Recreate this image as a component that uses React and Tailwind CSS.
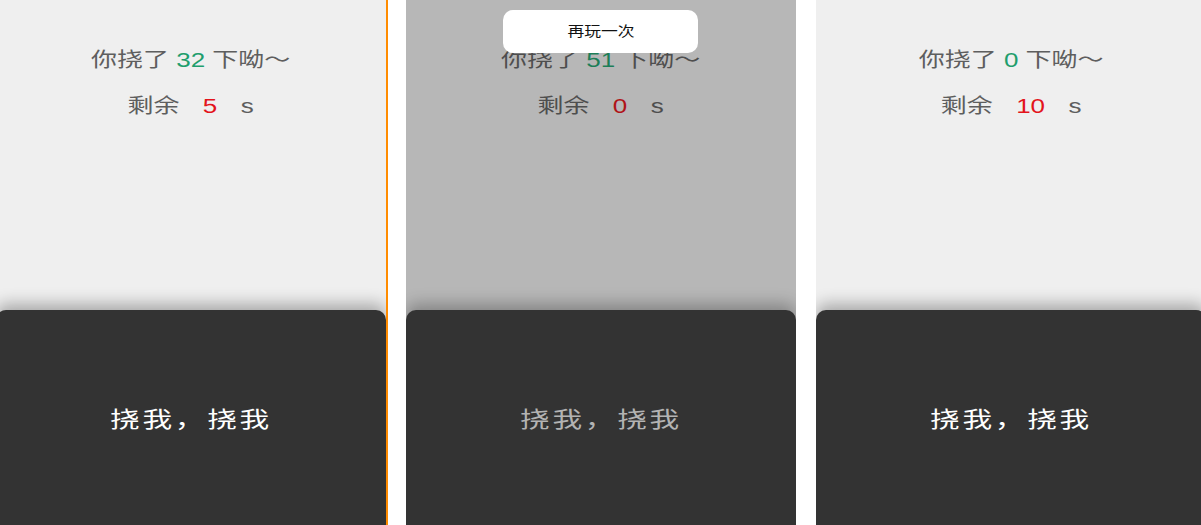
import React from "react";

const font = { fontFamily: '"Liberation Sans", "Noto Sans CJK SC", sans-serif' };

function Panel({ count, left, dim, children, className = "" }) {
    return (
        <div
            className={`relative w-[390px] h-[525px] shrink-0 flex flex-col overflow-hidden ${dim ? "bg-[#b7b7b7]" : "bg-[#efefef]"} ${className}`}
        >
            {/* score */}
            <div className="flex-1 flex flex-col items-center pt-[46px]">
                <div className={`text-[20px] leading-[28px] scale-x-[1.3] ${dim ? "text-[#4e4e4e]" : "text-[#5e5e5e]"}`}>
                    你挠了 <span className={dim ? "text-[#1d7e58]" : "text-[#1f9e6d]"}>{count}</span> 下呦～
                </div>
                <div className={`mt-[18px] text-[20px] leading-[28px] scale-x-[1.3] ${dim ? "text-[#4e4e4e]" : "text-[#5e5e5e]"}`}>
                    剩余<span className={`mx-[18px] ${dim ? "text-[#b01518]" : "text-[#e3141b]"}`}>{left}</span>s
                </div>
            </div>

            {/* tap area */}
            <div
                className={`h-[215px] shrink-0 rounded-t-[10px] bg-[#333333] flex justify-center pt-[95px] ${dim ? "shadow-[0_-6px_16px_rgba(0,0,0,0.28)]" : "shadow-[0_-6px_16px_rgba(0,0,0,0.3)]"}`}
            >
                <div className={`text-[22px] leading-[30px] tracking-[2px] scale-x-[1.35] ${dim ? "text-[#b3b3b3]" : "text-white"}`}>
                    挠我，挠我
                </div>
            </div>
            {children}
        </div>
    );
}

export default function App() {
    return (
        <div className="w-[1201px] h-[525px] overflow-hidden bg-white flex" style={font}>
            <Panel count={32} left={5} className="-ml-[4px] border-r-2 border-[#ff8c00] w-[392px]" />
            <Panel count={51} left={0} dim className="ml-[18px]">
                {/* replay dialog */}
                <button className="absolute top-[10px] left-[97px] w-[195px] h-[43px] rounded-[10px] bg-white flex items-center justify-center">
                    <span className="text-[14px] text-[#111] scale-x-[1.2]">再玩一次</span>
                </button>
            </Panel>
            <Panel count={0} left={10} className="ml-[20px]" />
        </div>
    );
}
